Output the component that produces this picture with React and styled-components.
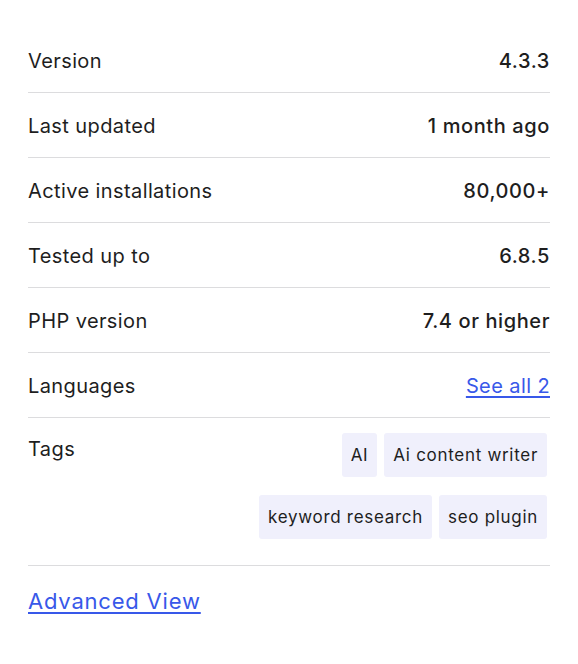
import React from "react";
import styled, { createGlobalStyle } from "styled-components";

const Global = createGlobalStyle`
  body {
    margin: 0;
    background: #fff;
    font-family: Inter, "Noto Sans", sans-serif;
    color: #1e1e1e;
  }
`;

const Wrap = styled.div`
  padding: 28px 28px 0 28px;
`;

const List = styled.ul`
  list-style: none;
  margin: 0;
  padding: 0;
`;

const Row = styled.li`
  display: flex;
  justify-content: space-between;
  align-items: ${({ $top }) => ($top ? "flex-start" : "center")};
  padding: ${({ $top }) => ($top ? "15px 0 26px" : "21px 0 18px")};
  border-bottom: 1px solid #dcdcde;
  font-size: 20px;
  line-height: 25px;
  letter-spacing: 0.4px;
`;

const Label = styled.span`
  font-weight: 400;
  padding-top: ${({ $top }) => ($top ? "4px" : "0")};
`;

const Value = styled.strong`
  font-weight: 500;
  letter-spacing: 0.6px;
`;

const Link = styled.a`
  color: #3858e9;
  text-decoration: underline;
  text-underline-offset: 3px;
  font-size: ${({ $big }) => ($big ? "22px" : "20px")};
  letter-spacing: ${({ $big }) => ($big ? "0.8px" : "0.4px")};
`;

const Tags = styled.div`
  display: flex;
  flex-wrap: wrap;
  justify-content: flex-end;
  gap: 18px 7px;
  max-width: 320px;
  margin-right: 3px;
`;

const Tag = styled.a`
  background: #f0f0fc;
  border-radius: 3px;
  padding: 10px 9px;
  font-size: 17px;
  line-height: 24px;
  letter-spacing: 0.7px;
  color: #1e1e1e;
  text-decoration: none;
`;

const Footer = styled.p`
  margin: 21px 0 0;
  line-height: 28px;
`;

const rows = [
  ["Version", "4.3.3"],
  ["Last updated", "1 month ago"],
  ["Active installations", "80,000+"],
  ["Tested up to", "6.8.5"],
  ["PHP version", "7.4 or higher"],
];

export default function App() {
  return (
    <Wrap>
      <Global />
      <List>
        {rows.map(([k, v]) => (
          <Row key={k}>
            <Label>{k}</Label>
            <Value>{v}</Value>
          </Row>
        ))}
        <Row>
          <Label>Languages</Label>
          <Link href="#">See all 2</Link>
        </Row>
        <Row $top>
          <Label $top>Tags</Label>
          <Tags>
            <Tag href="#">AI</Tag>
            <Tag href="#">Ai content writer</Tag>
            <Tag href="#">keyword research</Tag>
            <Tag href="#">seo plugin</Tag>
          </Tags>
        </Row>
      </List>
      <Footer>
        <Link $big href="#">Advanced View</Link>
      </Footer>
    </Wrap>
  );
}
